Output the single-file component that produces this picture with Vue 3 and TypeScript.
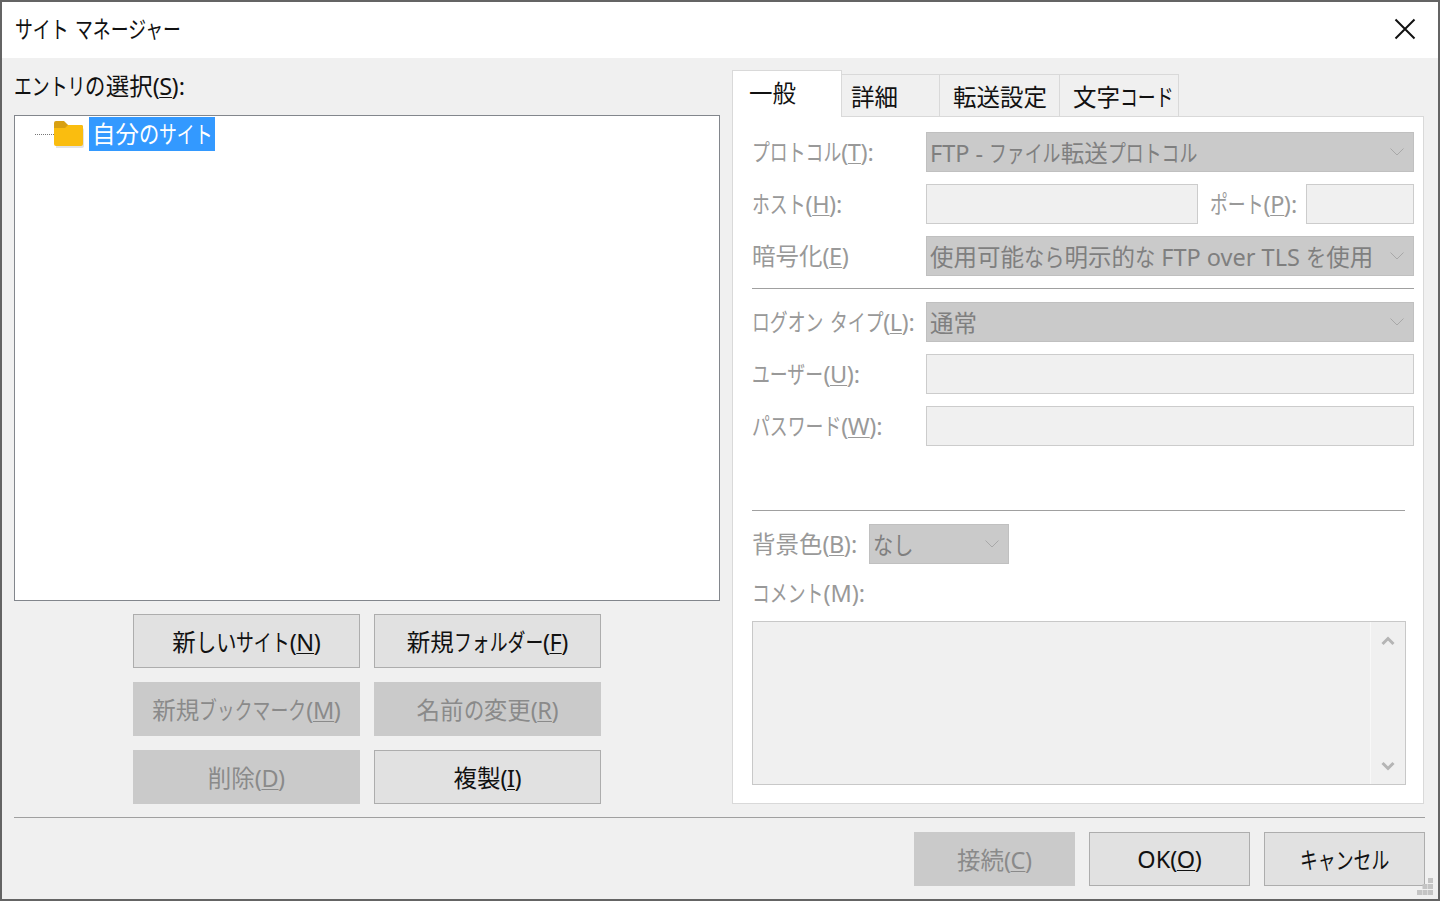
<script setup lang="ts">
import { h } from 'vue'

interface Btn { label: string; key: string; disabled?: boolean }

// The reference's UI font has condensed kana beside full-width kanji: kana runs are squeezed horizontally.
const KATA = 0.76
const HIRA = 0.86
const K = (props: { t: string }) =>
  props.t
    .split(/([\u30A0-\u30FF]+|[\u3040-\u309F]+)/)
    .filter(Boolean)
    .map((s) => {
      const ratio = /^[\u30A0-\u30FF]/.test(s) ? KATA : /^[\u3040-\u309F]/.test(s) ? HIRA : 0
      if (!ratio) return h('span', s)
      return h('span', {
        class: 'condensed',
        style: {
          display: 'inline-block',
          whiteSpace: 'nowrap',
          fontFeatureSettings: 'normal',
          transformOrigin: 'left center',
          width: `${s.length * ratio}em`,
          transform: `scaleX(${ratio})`,
        },
      }, s)
    })
K.props = ['t']

const treeButtons: Btn[] = [
  { label: '新しいサイト', key: 'N' },
  { label: '新規フォルダー', key: 'F' },
  { label: '新規ブックマーク', key: 'M', disabled: true },
  { label: '名前の変更', key: 'R', disabled: true },
  { label: '削除', key: 'D', disabled: true },
  { label: '複製', key: 'I' },
]
const footerButtons: Btn[] = [
  { label: '接続', key: 'C', disabled: true },
  { label: 'OK', key: 'O' },
  { label: 'キャンセル', key: '' },
]
const tabs = ['詳細', '転送設定', '文字コード']
</script>

<template>
  <div class="window">
    <header class="titlebar">
      <span class="title"><K t="サイト" /> <K t="マネージャー" /></span>
      <svg class="close" width="22" height="22" viewBox="0 0 22 22" aria-hidden="true">
        <path d="M1.5 1.5 20.5 20.5M20.5 1.5 1.5 20.5" stroke="#111" stroke-width="2" fill="none" />
      </svg>
    </header>
    <div class="body">
      <div class="main">
        <section class="left">
          <div class="entry-label"><K t="エントリの選択" />(<u>S</u>):</div>
          <div class="tree">
            <div class="tree-row">
              <span class="dots"></span>
              <svg class="folder" width="30" height="28" viewBox="0 0 30 28" aria-hidden="true">
                <path d="M2 5a2 2 0 0 1 2-2h8l4 4h11a2 2 0 0 1 2 2v16a2 2 0 0 1-2 2H1V5z" fill="#e3e3e3" transform="translate(1 1)" />
                <path d="M0 3a2 2 0 0 1 2-2h8l4 4h13a2 2 0 0 1 2 2v3H0z" fill="#d8a012" />
                <path d="M0 8h11l3-3h13a2 2 0 0 1 2 2v17a2 2 0 0 1-2 2H2a2 2 0 0 1-2-2z" fill="#fabd0f" />
              </svg>
              <span class="selected"><K t="自分のサイト" /></span>
            </div>
          </div>
          <div class="tree-buttons">
            <div v-for="b in treeButtons" :key="b.key" class="btn" :class="{ disabled: b.disabled }">
              <span><K :t="b.label" />(<u>{{ b.key }}</u>)</span>
            </div>
          </div>
        </section>
        <section class="right">
          <div class="tabs">
            <div class="tab active">一般</div>
            <div v-for="t in tabs" :key="t" class="tab" :class="{ first: t === '詳細', last: t === '文字コード' }"><K :t="t" /></div>
          </div>
          <div class="panel">
            <div class="row">
              <label class="lbl"><K t="プロトコル" />(<u>T</u>):</label>
              <div class="select"><span>FTP - <K t="ファイル転送プロトコル" /></span><svg class="chev" width="14" height="8" viewBox="0 0 14 8"><path d="M.5.5 7 7 13.5.5" /></svg></div>
            </div>
            <div class="row">
              <label class="lbl"><K t="ホスト" />(<u>H</u>):</label>
              <div class="input host"></div>
              <label class="lbl port-lbl"><K t="ポート" />(<u>P</u>):</label>
              <div class="input port"></div>
            </div>
            <div class="row">
              <label class="lbl">暗号化(<u>E</u>)</label>
              <div class="select"><span><K t="使用可能なら明示的な" /> FTP over TLS <K t="を使用" /></span><svg class="chev" width="14" height="8" viewBox="0 0 14 8"><path d="M.5.5 7 7 13.5.5" /></svg></div>
            </div>
            <div class="rule"></div>
            <div class="row">
              <label class="lbl"><K t="ログオン" /> <K t="タイプ" />(<u>L</u>):</label>
              <div class="select"><span>通常</span><svg class="chev" width="14" height="8" viewBox="0 0 14 8"><path d="M.5.5 7 7 13.5.5" /></svg></div>
            </div>
            <div class="row">
              <label class="lbl"><K t="ユーザー" />(<u>U</u>):</label>
              <div class="input"></div>
            </div>
            <div class="row">
              <label class="lbl"><K t="パスワード" />(<u>W</u>):</label>
              <div class="input"></div>
            </div>
            <div class="rule rule2"></div>
            <div class="row bg-row">
              <label class="lbl bg-lbl">背景色(<u>B</u>):</label>
              <div class="select small"><span><K t="なし" /></span><svg class="chev" width="14" height="8" viewBox="0 0 14 8"><path d="M.5.5 7 7 13.5.5" /></svg></div>
            </div>
            <div class="comment-lbl lbl"><K t="コメント" />(M):</div>
            <div class="textarea">
              <div class="scroll">
                <svg width="14" height="10" viewBox="0 0 14 10"><path d="M1.5 8 7 2.5 12.5 8" /></svg>
                <svg width="14" height="10" viewBox="0 0 14 10"><path d="M1.5 2 7 7.5 12.5 2" /></svg>
              </div>
            </div>
          </div>
        </section>
      </div>
      <div class="bottom-rule"></div>
      <div class="footer">
        <div v-for="b in footerButtons" :key="b.label" class="btn foot" :class="{ disabled: b.disabled }">
          <span><K :t="b.label" /><template v-if="b.key">(<u>{{ b.key }}</u>)</template></span>
        </div>
      </div>
      <svg class="grip" width="16" height="17" viewBox="0 0 16 17" aria-hidden="true">
        <path d="M11 0h5v5h-5zM5.500 6h5v5h-5zM11 6h5v5h-5zM0 12h5v5H0zM5.500 12h5v5h-5zM11 12h5v5h-5z" fill="#c4c4c4" />
      </svg>
    </div>
  </div>
</template>

<style>
html, body { margin: 0; background: #666; }
</style>

<style scoped>
.window {
  box-sizing: border-box;
  width: 1440px;
  height: 901px;
  border: 2px solid #646464;
  background: #f0f0f0;
  display: flex;
  flex-direction: column;
  overflow: hidden;
  font-family: "Noto Sans", "Noto Sans CJK JP", sans-serif;
  font-size: 23.5px;
  font-feature-settings: "palt";
  color: #111;
}
u { text-underline-offset: 2px; text-decoration-thickness: 1px; margin: 0 -0.5px; }
.titlebar {
  height: 56px;
  background: #fff;
  display: flex;
  align-items: center;
  justify-content: space-between;
  padding: 0 22px 0 13px;
  flex: none;
}
.title { font-size: 23.5px; position: relative; top: -2px; }
.close { position: relative; top: -1px; }
.body {
  position: relative;
  flex: 1;
  padding: 12px 13px 0 12px;
}
.main { display: flex; gap: 12px; }
.left { width: 706px; flex: none; }
.entry-label { height: 45px; line-height: 33px; }
.tree {
  box-sizing: border-box;
  height: 486px;
  border: 1px solid #82868c;
  background: #fff;
  padding: 1px 0 0 20px;
}
.tree-row { display: flex; align-items: center; height: 34px; }
.dots { width: 19px; border-top: 1px dotted #777; }
.folder { flex: none; margin-right: 5px; }
.selected {
  background: #3399ff;
  color: #fff;
  height: 34px;
  line-height: 34px;
  padding: 0 2px 0 3px;
}
.tree-buttons {
  display: grid;
  grid-template-columns: 227px 227px;
  grid-auto-rows: 54px;
  gap: 14px;
  margin: 13px 0 0 119px;
}
.btn {
  box-sizing: border-box;
  display: flex;
  align-items: center;
  justify-content: center;
  padding-bottom: 1px;
  background: #e1e1e1;
  border: 1px solid #adadad;
}
.btn.disabled { background: #cacaca; border-color: #cacaca; color: #8a8a8a; }
.right { width: 692px; flex: none; }
.tabs { display: flex; align-items: flex-end; height: 46px; }
.tab {
  box-sizing: border-box;
  height: 42px;
  width: 120px;
  padding-left: 13px;
  background: #f0f0f0;
  border: 1px solid #d9d9d9;
  border-left: 0;
  border-bottom: 0;
  line-height: 44px;
  text-align: left;
}
.tab.first { width: 98px; padding-left: 9px; }
.tab.last { width: 119px; }
.tab.active {
  position: relative;
  z-index: 1;
  width: 110px;
  height: 47px;
  margin-bottom: -1px;
  background: #fff;
  border-left: 1px solid #d9d9d9;
  padding-left: 16px;
  line-height: 44px;
}
.panel {
  box-sizing: border-box;
  height: 688px;
  background: #fff;
  border: 1px solid #d9d9d9;
  padding: 15px 9px 0 19px;
}
.row { display: flex; align-items: center; height: 40px; margin-bottom: 12px; }
.lbl { color: #999; width: 174px; flex: none; white-space: nowrap; padding-bottom: 2px; box-sizing: border-box; }
.select {
  box-sizing: border-box;
  flex: 1;
  height: 40px;
  background: #cacaca;
  border: 1px solid #c0c0c0;
  color: #7f7f7f;
  display: flex;
  align-items: center;
  justify-content: space-between;
  padding: 0 9px 1px 3px;
  white-space: nowrap;
}
.chev { flex: none; margin-top: 1px; }
.chev path, .scroll path { fill: none; stroke: #a8a8a8; }
.input {
  box-sizing: border-box;
  flex: 1;
  height: 40px;
  background: #f0f0f0;
  border: 1px solid #ccc;
}
.input.host { flex: none; width: 272px; }
.port-lbl { width: 96px; margin-left: 12px; }
.input.port { flex: none; width: 108px; }
.rule { height: 1px; background: #a0a0a0; margin: 0 0 13px; }
.rule2 { margin: 64px 9px 13px 0; background: #a0a0a0; }
.row.bg-row { margin-bottom: 0; }
.bg-lbl { width: 117px; }
.select.small { flex: none; width: 140px; }
.comment-lbl { height: 57px; line-height: 58px; width: auto; padding-bottom: 0; }
.textarea {
  box-sizing: border-box;
  width: 654px;
  height: 164px;
  background: #f0f0f0;
  border: 1px solid #c8c8c8;
  display: flex;
  justify-content: flex-end;
}
.scroll {
  box-sizing: border-box;
  width: 35px;
  border-left: 1px solid #f8f8f8;
  display: flex;
  flex-direction: column;
  align-items: center;
  justify-content: space-between;
  padding: 14px 0 13px;
}
.scroll path { stroke: #b5b5b5; stroke-width: 3; }
.bottom-rule { height: 1px; background: #a0a0a0; margin-top: 13px; }
.footer {
  display: flex;
  justify-content: flex-end;
  gap: 14px;
  margin-top: 14px;
}
.btn.foot { width: 161px; height: 54px; }
.grip { position: absolute; right: 5px; bottom: 4px; }
</style>
